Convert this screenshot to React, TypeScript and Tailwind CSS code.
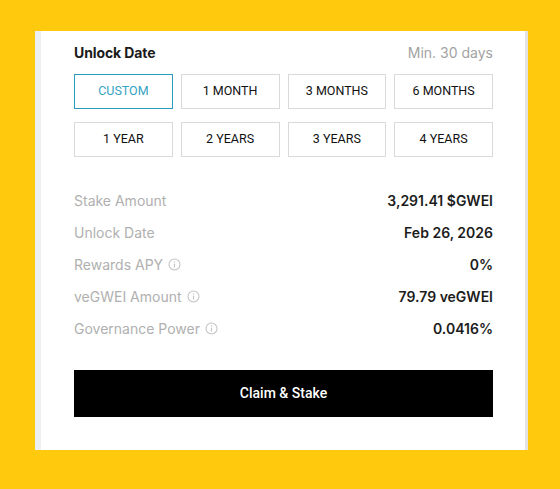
import React from "react";

const InfoIcon = () => (
  <svg width="13" height="13" viewBox="0 0 12 12" fill="none" className="ml-[5px] shrink-0">
    <circle cx="6" cy="6" r="5.1" stroke="#c2c2c2" strokeWidth="0.95" />
    <line x1="6" y1="5.2" x2="6" y2="8.7" stroke="#c2c2c2" strokeWidth="1.05" />
    <circle cx="6" cy="3.6" r="0.65" fill="#c2c2c2" />
  </svg>
);

const options = [
  "CUSTOM",
  "1 MONTH",
  "3 MONTHS",
  "6 MONTHS",
  "1 YEAR",
  "2 YEARS",
  "3 YEARS",
  "4 YEARS",
];

const rows: { label: string; value: string; info?: boolean }[] = [
  { label: "Stake Amount", value: "3,291.41 $GWEI" },
  { label: "Unlock Date", value: "Feb 26, 2026" },
  { label: "Rewards APY", value: "0%", info: true },
  { label: "veGWEI Amount", value: "79.79 veGWEI", info: true },
  { label: "Governance Power", value: "0.0416%", info: true },
];

export default function App() {
  return (
    <div className="w-[560px] h-[489px] bg-[#ffc90e] pt-[31px] pl-[35px] font-['Inter',sans-serif]">
      <div className="w-[493px] h-[419px] bg-white flex">
        <div className="w-[6px] bg-[#edf0f2]" />
        <div className="flex-1 pl-[33px] pr-[32px] pt-[11px]">
          <div className="flex justify-between items-center h-[20px]">
            <span className="text-[14px] font-bold text-[#1a1a1a] tracking-[-0.1px]">Unlock Date</span>
            <span className="text-[14px] text-[#a3a3a3]">Min. 30 days</span>
          </div>
          <div className="grid grid-cols-4 gap-x-[8px] gap-y-[13px] mt-[12px] font-['Roboto',sans-serif]">
            {options.map((o, i) => (
              <div
                key={o}
                className={
                  i === 0
                    ? "h-[35px] flex items-center justify-center border border-[#2b9cbb] text-[#35a2c2] text-[12.5px]"
                    : "h-[35px] flex items-center justify-center border border-[#dadada] text-[#111111] text-[12.5px]"
                }
              >
                {o}
              </div>
            ))}
          </div>
          <div className="mt-[27px] flex flex-col">
            {rows.map((r) => (
              <div key={r.label} className="h-[32px] flex items-center justify-between">
                <span className="flex items-center text-[14px] text-[#b0b0b0]">
                  {r.label}
                  {r.info && <InfoIcon />}
                </span>
                <span className="text-[14px] font-semibold text-[#1c1c1c]">{r.value}</span>
              </div>
            ))}
          </div>
          <button className="mt-[26px] w-full h-[47px] bg-black text-white font-['Roboto',sans-serif] font-medium text-[14px] flex items-center justify-center">
            Claim &amp; Stake
          </button>
        </div>
        <div className="w-[3px] bg-[#e3e3e3]" />
      </div>
    </div>
  );
}
